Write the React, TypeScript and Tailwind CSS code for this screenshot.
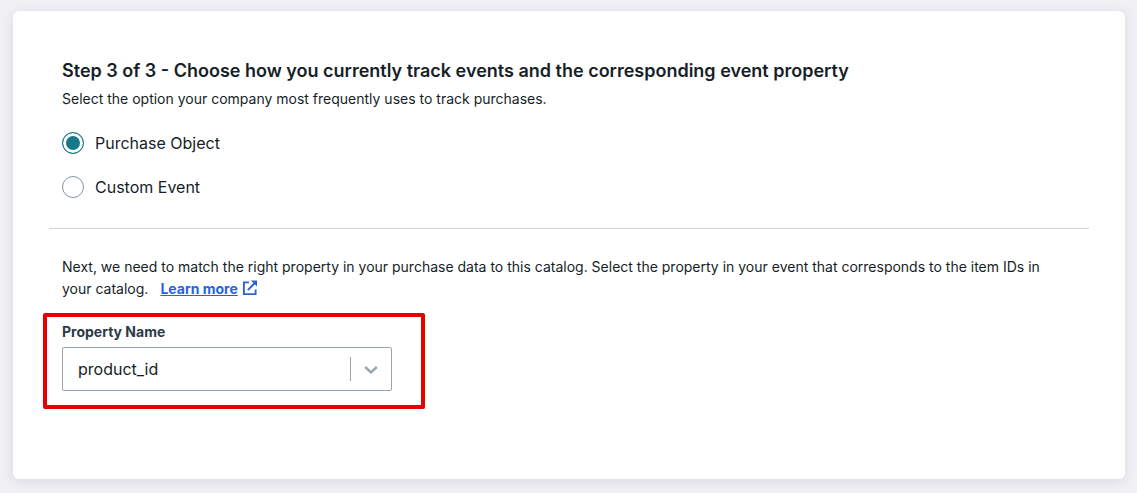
import { useState } from "react";

const trackingOptions = [
  { value: "purchase", label: "Purchase Object" },
  { value: "custom", label: "Custom Event" },
];

function ExternalLinkIcon() {
  return (
    <svg viewBox="0 0 16 16" className="ml-1 inline-block size-4 align-[-2px]" fill="none" stroke="currentColor" strokeWidth="1.9" aria-hidden="true">
      <path d="M7 2.4H1.9v11.7h11.7V9.6" />
      <path d="M5.8 10.2 12.8 3" />
      <path d="M9 0.6h6v6z" fill="currentColor" stroke="none" />
    </svg>
  );
}

export default function App() {
  const [tracking, setTracking] = useState("purchase");

  return (
    <div className="min-h-screen bg-[#f0f0f5] px-3 pt-[11px] pb-[13px] font-['Inter',sans-serif] text-[#161e27]">
      <main className="ml-px rounded-md bg-white px-9 pt-12 pb-[70px] shadow-[0_2px_12px_rgba(40,50,65,0.12)]">
        <section className="px-[13px]">
          <h1 className="text-lg leading-6 font-semibold">
            Step 3 of 3 - Choose how you currently track events and the corresponding event property
          </h1>
          <p className="mt-1 text-sm leading-6">
            Select the option your company most frequently uses to track purchases.
          </p>
          <fieldset aria-label="Event tracking method" className="mt-5 flex flex-col items-start gap-5">
            {trackingOptions.map((option) => (
              <label key={option.value} className="flex items-center gap-[11px] text-base leading-6">
                <input
                  type="radio"
                  name="tracking"
                  value={option.value}
                  checked={tracking === option.value}
                  onChange={() => setTracking(option.value)}
                  className="size-[22px] shrink-0 appearance-none rounded-full border border-[#87939d] bg-white checked:border-[#167a8b] checked:bg-[#167a8b] checked:shadow-[inset_0_0_0_3px_#fff]"
                />
                {option.label}
              </label>
            ))}
          </fieldset>
        </section>

        <hr className="mt-[29px] border-[#d2d4d6]" />

        <section className="px-[13px] pt-[27px]">
          <p className="pr-4 text-sm leading-[22px]">
            Next, we need to match the right property in your purchase data to this catalog. Select the property in your event that corresponds to the item IDs in your catalog.
            <a href="#learn-more" className="ml-3 font-bold whitespace-nowrap text-[#2864d8]">
              <span className="underline">Learn more</span>
              <ExternalLinkIcon />
            </a>
          </p>
          <div className="mt-[13px] -ml-[19px] w-[382px] max-w-full rounded-xs border-4 border-[#e60000] pt-1 pr-[29px] pb-3.5 pl-[15px]">
            <label htmlFor="property" className="block text-sm leading-[22px] font-bold text-[#2d3a47]">
              Property Name
            </label>
            <div className="mt-1 grid items-center">
              <select id="property" defaultValue="product_id" className="col-start-1 row-start-1 h-11 w-full appearance-none rounded-xs border border-[#99a5ad] bg-white pr-12 pl-[15px] text-base">
                <option value="product_id">product_id</option>
              </select>
              <span className="pointer-events-none col-start-1 row-start-1 mr-px flex h-6 w-[41px] items-center justify-center justify-self-end border-l border-[#99a5ad] pt-0.5 text-[#99a5ad]">
                <svg viewBox="0 0 14 8" className="h-2 w-3.5" fill="none" stroke="currentColor" strokeWidth="2.4" aria-hidden="true">
                  <path d="m1.2 1 5.8 5.4L12.8 1" />
                </svg>
              </span>
            </div>
          </div>
        </section>
      </main>
    </div>
  );
}
